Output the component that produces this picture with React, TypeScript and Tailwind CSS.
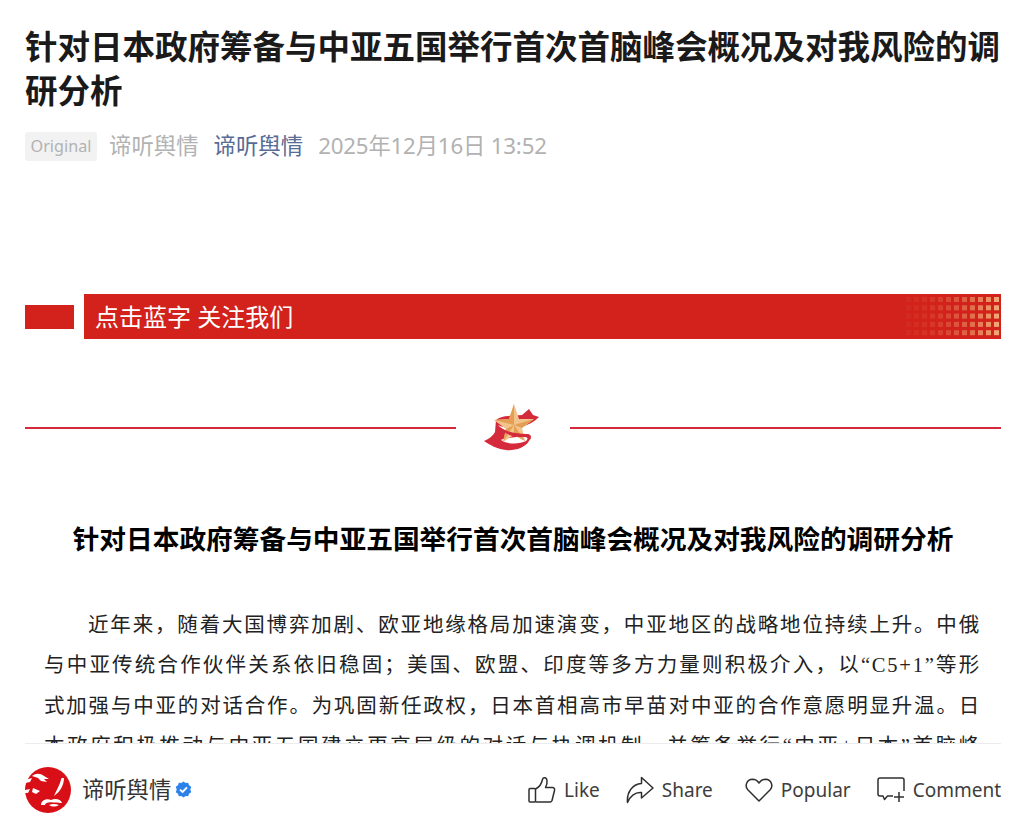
import React from "react";

const cjk = "font-['Noto_Sans','Noto_Sans_CJK_SC',sans-serif]";

function Dots() {
  const cols = 12;
  const rows = 5;
  const cells = [];
  for (let r = 0; r < rows; r++) {
    for (let c = 0; c < cols; c++) {
      const t = (c + 1) / cols;
      cells.push(
        <rect key={`${r}-${c}`} x={c * 8} y={r * 8.3} width={5} height={5} fill="#f0b27a" opacity={0.06 + t * t * 0.86} />
      );
    }
  }
  return (
    <svg width="93" height="39" viewBox="0 0 93 39" className="shrink-0">
      {cells}
    </svg>
  );
}

function StarLogo() {
  return (
    <svg width="58" height="48" viewBox="0 0 58 48">
      <path d="M0 37 C5 35 9 32 11 28 L12 16 C16 13 20 12 24 12 L38 11 L45 5 L49 11 L55 13 C50 18 44 21 37 23 C28 25 20 24 14 21 C18 27 28 30 42 30 C47 30 47 33 45 37 C41 44 30 47 22 46 C13 45 6 41 0 37 Z" fill="#d42a3c" />
      <path d="M17 36 C24 41 36 40 42 37 C44 35 44 33 42 33 C33 33 23 33 17 36 Z" fill="#ffffff" />
      <path d="M30 0 L35 15 L50 15 L38 24 L41 37 L30 31 L19 38 L22 25 L10 16 L25 15 Z" fill="#f2c48c" />
      <path d="M30 0 L30 21 L25 15 Z M30 21 L50 15 L38 24 Z M30 21 L41 37 L30 31 Z M30 21 L19 38 L22 25 Z M30 21 L10 16 L25 15 Z" fill="#e3a055" />
      <path d="M15 22 C21 28 32 30 43 30 C47 30 48 33 46 36 C44 32.5 40 33 36 33 C27 33 19 29 15 22 Z" fill="#d42a3c" />
    </svg>
  );
}

function Dragon() {
  return (
    <svg width="46" height="46" viewBox="0 0 46 46">
      <circle cx="23" cy="23" r="23" fill="#d80f16" />
      <path d="M0 13 L7 11 L5 15 L0 16 Z M0 23 L5 22 L3 26 L0 26 Z" fill="#ffffff" />
      <path d="M7 9 C11 6 15 6 19 9 L24 12 L19 12 L22 15 L16 14 L13 11 Z" fill="#ffffff" />
      <path d="M39 11 C39 18 35 25 29 29 C31 24 35 18 36.5 11 Z" fill="#ffffff" />
      <path d="M8 21 L15 24 L11 27 L7 25 Z" fill="#ffffff" />
      <path d="M16 38 C16 33 22 31 26 33 C30 31 36 32 37 36 C36 36.5 32 35 28 35.5 C24 34.5 20 36 20 38 Z" fill="#ffffff" />
      <path d="M24 38 C27 36.5 31 37 34 38 C30 40 27 40 24 38 Z" fill="#ffffff" />
    </svg>
  );
}

function Verified() {
  return (
    <svg width="17" height="17" viewBox="0 0 17 17">
      <path d="M8.5 0.5 L10.6 2 L13.2 1.8 L14 4.3 L16.2 5.8 L15.3 8.5 L16.2 11.2 L14 12.7 L13.2 15.2 L10.6 15 L8.5 16.5 L6.4 15 L3.8 15.2 L3 12.7 L0.8 11.2 L1.7 8.5 L0.8 5.8 L3 4.3 L3.8 1.8 L6.4 2 Z" fill="#2c82ea" />
      <path d="M5 8.6 L7.6 11 L12 6.3" fill="none" stroke="#fff" strokeWidth="1.9" />
    </svg>
  );
}

function Like() {
  return (
    <svg width="28" height="28" viewBox="0 0 28 28" fill="none" stroke="#2f2f2f" strokeWidth="1.5" strokeLinejoin="round">
      <rect x="1" y="12.5" width="6.5" height="13.5" rx="1" />
      <path d="M7.5 13 C11 11.5 13.5 8 14.5 3.5 C15 1 18.5 1 19 4.5 C19.4 7 18.5 9.5 17.5 11.5 L24.5 11.5 C26 11.5 27 13 26.5 14.5 L24 24.5 C23.6 25.6 22.8 26 22 26 L7.5 26" />
    </svg>
  );
}

function Share() {
  return (
    <svg width="28" height="28" viewBox="0 0 28 28" fill="none" stroke="#2f2f2f" strokeWidth="1.5" strokeLinejoin="round">
      <path d="M15.5 1.5 L27 12 L15.5 22 L15.5 16.5 C9 16 4.5 19.5 1.5 26.5 C0.5 17 6 8 15.5 7.5 Z" />
    </svg>
  );
}

function Heart() {
  return (
    <svg width="28" height="24" viewBox="0 0 28 24" fill="none" stroke="#2f2f2f" strokeWidth="1.5" strokeLinejoin="round">
      <path d="M14 23 L2.8 11.8 C-0.5 8 1.5 1.5 7.5 1.2 C10.5 1.2 12.5 2.8 14 5 C15.5 2.8 17.5 1.2 20.5 1.2 C26.5 1.5 28.5 8 25.2 11.8 Z" />
    </svg>
  );
}

function Comment() {
  return (
    <svg width="28" height="25" viewBox="0 0 28 25" fill="none" stroke="#2f2f2f" strokeWidth="1.5" strokeLinejoin="round">
      <path d="M16 19 L10.5 19 L7.5 22.5 L6 19 L3 19 C1.8 19 1 18.2 1 17 L1 3 C1 1.8 1.8 1 3 1 L25 1 C26.2 1 27 1.8 27 3 L27 14" />
      <path d="M17 20 L27 20 M22 15 L22 25" />
    </svg>
  );
}

function Action({ icon, label, className }: { icon: React.ReactNode; label: string; className: string }) {
  return (
    <div className={`flex items-center ${className}`}>
      <div className="flex h-7 w-7 items-center justify-center">{icon}</div>
      <span className="ml-[8px] text-[19px] leading-7 text-[#3d3d3d]">{label}</span>
    </div>
  );
}

const serif = "font-['Liberation_Serif','Noto_Sans_CJK_SC',serif]";

export default function App() {
  return (
    <div className={`flex h-[829px] w-[1024px] flex-col overflow-hidden bg-white ${cjk}`}>
      <div className="min-h-0 flex-1 overflow-hidden pl-[25px] pr-[23px]">
        <h1 className="mt-[25px] text-[32.5px] font-bold leading-[44px] text-[#1a1a1a]">
          针对日本政府筹备与中亚五国举行首次首脑峰会概况及对我风险的调研分析
        </h1>
        <div className="mt-[17px] flex h-[32px] items-center">
          <span className="flex h-[29px] w-[72px] items-center justify-center rounded-[3px] bg-[#f2f2f2] text-[16.2px] text-[#b2b2b2]">
            Original
          </span>
          <span className="ml-[12px] text-[22.4px] text-[#b2b2b2]">谛听舆情</span>
          <span className="ml-[15px] text-[22.4px] text-[#576b95]">谛听舆情</span>
          <span className="ml-[15px] text-[22.3px] tracking-[-0.18px] text-[#b2b2b2]">2025年12月16日 13:52</span>
        </div>

        <div className="mt-[132px] flex items-center">
          <div className="h-[24px] w-[49px] bg-[#d2221b]" />
          <div className="ml-[10px] flex h-[45px] flex-1 items-center justify-between bg-[#d2221b] pl-[11px] pr-[2px]">
            <span className="text-[24px] text-white">点击蓝字 关注我们</span>
            <Dots />
          </div>
        </div>

        <div className="mt-[65px] flex items-center">
          <div className="h-[2px] flex-1 bg-[#d42a3c]" />
          <div className="mx-[28px] flex w-[58px] justify-center">
            <StarLogo />
          </div>
          <div className="h-[2px] flex-1 bg-[#d42a3c]" />
        </div>

        <h2 className="mt-[69px] text-center text-[26.7px] font-bold leading-[36px] text-black">
          针对日本政府筹备与中亚五国举行首次首脑峰会概况及对我风险的调研分析
        </h2>

        <p className="mt-[47px] pl-[19px] pr-[20px] text-justify indent-[44px] text-[20.5px] leading-[40px] tracking-[1.8px] text-[#222222]">
          近年来，随着大国博弈加剧、欧亚地缘格局加速演变，中亚地区的战略地位持续上升。中俄与中亚传统合作伙伴关系依旧稳固；美国、欧盟、印度等多方力量则积极介入，以
          <span className={serif}>“C5+1”</span>
          等形式加强与中亚的对话合作。为巩固新任政权，日本首相高市早苗对中亚的合作意愿明显升温。日本政府积极推动与中亚五国建立更高层级的对话与协调机制，并筹备举行
          <span className={serif}>“</span>中亚<span className={serif}>+</span>日本<span className={serif}>”</span>
          首脑峰会。
        </p>
      </div>

      <div className="ml-[25px] mr-[23px] flex h-[86px] shrink-0 items-center border-t border-[#ececec] bg-white pt-[6px]">
        <Dragon />
        <span className="ml-[11px] text-[22.3px] text-[#333333]">谛听舆情</span>
        <span className="ml-[4px]">
          <Verified />
        </span>
        <div className="ml-auto flex items-center">
          <Action icon={<Like />} label="Like" className="" />
          <Action icon={<Share />} label="Share" className="ml-[26px]" />
          <Action icon={<Heart />} label="Popular" className="ml-[32px]" />
          <Action icon={<Comment />} label="Comment" className="ml-[26px]" />
        </div>
      </div>
    </div>
  );
}
